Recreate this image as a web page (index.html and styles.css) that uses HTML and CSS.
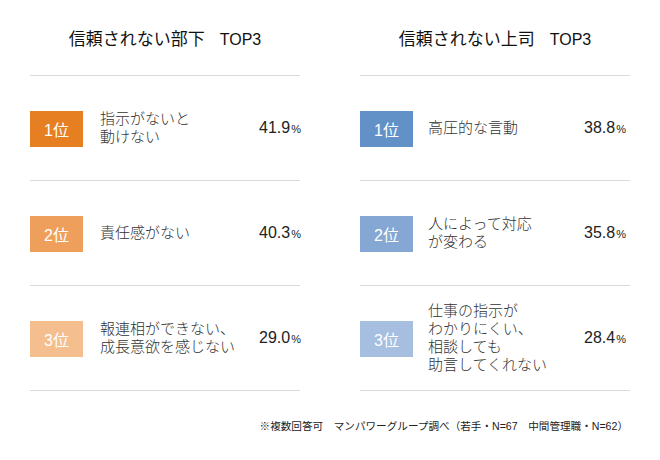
FILE: index.html
```html
<!DOCTYPE html>
<html lang="ja">
<head>
<meta charset="utf-8">
<link rel="stylesheet" href="styles.css">
</head>
<body>
<div class="panels">
  <section class="panel panel-sub">
    <h2 class="title">信頼されない部下　<span class="top">TOP3</span></h2>
    <div class="row">
      <div class="badge o1">1位</div>
      <div class="label">指示がないと<br>動けない</div>
      <div class="pct">41.9<span class="unit">%</span></div>
    </div>
    <div class="row">
      <div class="badge o2">2位</div>
      <div class="label">責任感がない</div>
      <div class="pct">40.3<span class="unit">%</span></div>
    </div>
    <div class="row">
      <div class="badge o3">3位</div>
      <div class="label">報連相ができない、<br>成長意欲を感じない</div>
      <div class="pct">29.0<span class="unit">%</span></div>
    </div>
  </section>
  <section class="panel panel-boss">
    <h2 class="title">信頼されない上司　<span class="top">TOP3</span></h2>
    <div class="row">
      <div class="badge b1">1位</div>
      <div class="label">高圧的な言動</div>
      <div class="pct">38.8<span class="unit">%</span></div>
    </div>
    <div class="row">
      <div class="badge b2">2位</div>
      <div class="label">人によって対応<br>が変わる</div>
      <div class="pct">35.8<span class="unit">%</span></div>
    </div>
    <div class="row">
      <div class="badge b3">3位</div>
      <div class="label">仕事の指示が<br>わかりにくい、<br>相談しても<br>助言してくれない</div>
      <div class="pct">28.4<span class="unit">%</span></div>
    </div>
  </section>
</div>
<p class="note">※複数回答可　マンパワーグループ調べ（若手・N=67　中間管理職・N=62）</p>
</body>
</html>
```
FILE: styles.css
```css
html, body {
  margin: 0;
  padding: 0;
  background: #fff;
}
body {
  width: 660px;
  height: 460px;
  font-family: "Liberation Sans", "Noto Sans CJK JP", sans-serif;
  color: #222;
}
.panels {
  display: grid;
  grid-template-columns: 270px 270px;
  column-gap: 60px;
  padding: 0 30px;
}
.title {
  margin: 0;
  height: 70px;
  padding-top: 5px;
  line-height: 70px;
  text-align: center;
  font-size: 17px;
  font-weight: normal;
  color: #111;
  white-space: pre;
}
.top {
  font-size: 16px;
  margin-left: -2px;
}
.row {
  height: 104px;
  border-top: 1px solid #dadada;
  display: grid;
  align-items: center;
}
.row:last-child {
  border-bottom: 1px solid #dadada;
}
.panel-sub .row {
  grid-template-columns: 53px 176px auto;
}
.panel-sub .label { margin-left: 17px; }
.panel-boss .row {
  grid-template-columns: 53px 171px auto;
}
.panel-boss .label { margin-left: 15px; }
.badge {
  height: 36px;
  display: flex;
  align-items: center;
  justify-content: center;
  color: #fff;
  font-size: 16px;
  margin-top: 1px;
}
.o1 { background: #e67f22; }
.o2 { background: #ee9f5b; }
.o3 { background: #f4be8e; }
.b1 { background: #6291c8; }
.b2 { background: #85a7d3; }
.b3 { background: #a6bee0; }
.label {
  font-size: 15px;
  line-height: 18px;
  font-weight: 300;
  color: #333;
  white-space: nowrap;
}
.pct {
  font-size: 16px;
  color: #222;
  white-space: nowrap;
}
.unit {
  font-size: 11px;
  margin-left: 1px;
}
.note {
  margin: 27px 0 0;
  padding-right: 32px;
  text-align: right;
  font-size: 10.6px;
  line-height: 16px;
  color: #222;
}
```
